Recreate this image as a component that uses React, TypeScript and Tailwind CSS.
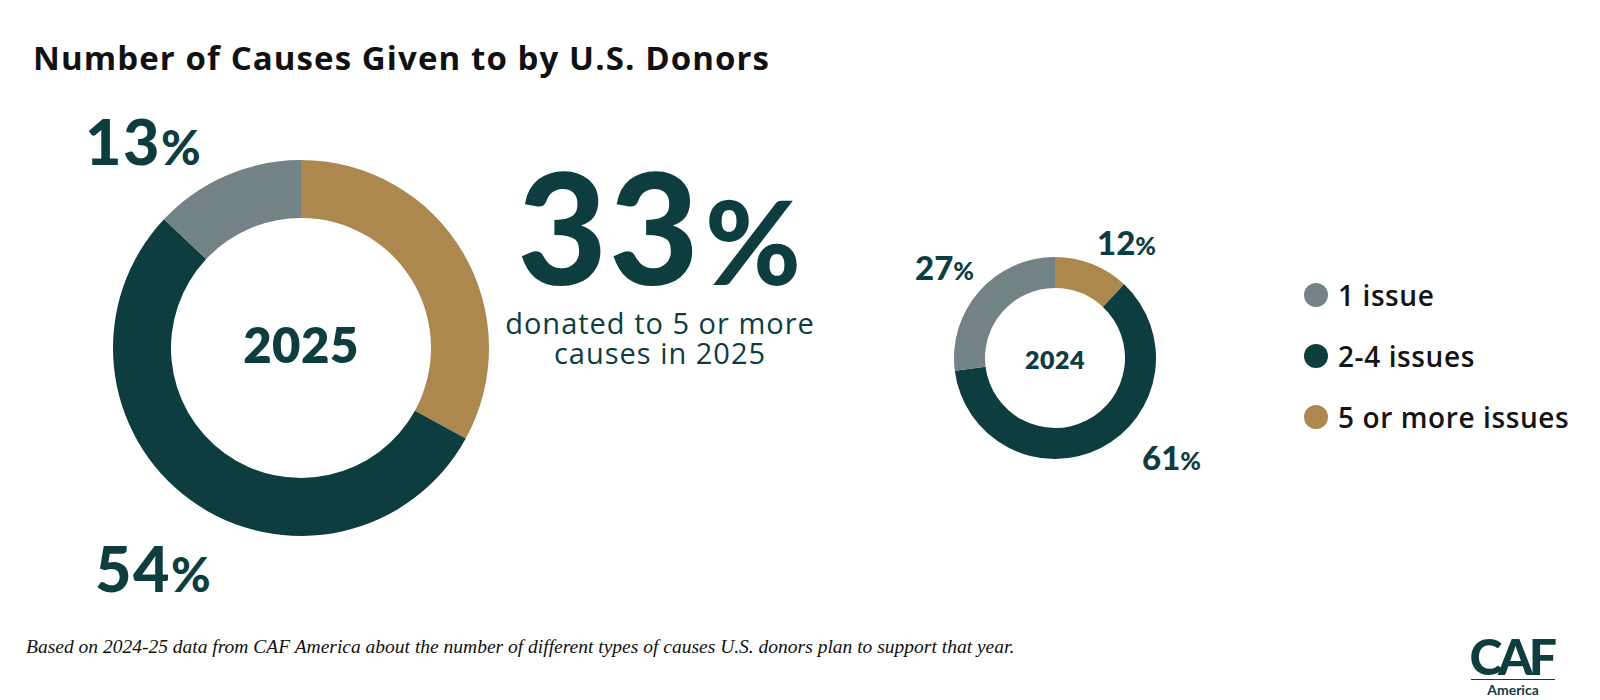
const DARK = "#0e3d3f";
const TAN = "#ad884e";
const GRAY = "#738385";

type Slice = { value: number; color: string };

function point(cx: number, cy: number, radius: number, deg: number) {
  const a = (deg * Math.PI) / 180;
  return [cx + radius * Math.sin(a), cy - radius * Math.cos(a)];
}

function arcPath(cx: number, cy: number, R: number, r: number, a0: number, a1: number) {
  const large = a1 - a0 > 180 ? 1 : 0;
  const [x0, y0] = point(cx, cy, R, a0);
  const [x1, y1] = point(cx, cy, R, a1);
  const [x2, y2] = point(cx, cy, r, a1);
  const [x3, y3] = point(cx, cy, r, a0);
  return `M ${x0} ${y0} A ${R} ${R} 0 ${large} 1 ${x1} ${y1} L ${x2} ${y2} A ${r} ${r} 0 ${large} 0 ${x3} ${y3} Z`;
}

function Donut({ size, thickness, slices }: { size: number; thickness: number; slices: Slice[] }) {
  const R = size / 2;
  const r = R - thickness;
  let acc = 0;
  return (
    <svg width={size} height={size} viewBox={`0 0 ${size} ${size}`} className="block">
      {slices.map((s, i) => {
        const a0 = acc * 3.6;
        acc += s.value;
        const a1 = acc * 3.6;
        return <path key={i} d={arcPath(R, R, R, r, a0, a1)} fill={s.color} />;
      })}
    </svg>
  );
}

const LEGEND = [
  { label: "1 issue", color: "bg-[#738385]" },
  { label: "2-4 issues", color: "bg-[#0e3d3f]" },
  { label: "5 or more issues", color: "bg-[#ad884e]" },
];

export default function App() {
  return (
    <div className="w-[1600px] h-[700px] bg-white flex flex-col overflow-hidden font-['Lato',sans-serif]">
      <h1 className="ml-[33px] mt-[42px] text-[33px] leading-[32px] font-bold text-[#111111] font-['Open_Sans',sans-serif] tracking-[1.1px]">
        Number of Causes Given to by U.S. Donors
      </h1>

      <div className="flex items-start mt-[26px] h-[500px] shrink-0">
        {/* 2025 donut */}
        <div className="relative w-[420px] h-[500px] ml-[80px] pt-[60px] pl-[33px] text-[#0e3d3f]">
          <Donut
            size={376}
            thickness={58}
            slices={[
              { value: 33, color: TAN },
              { value: 54, color: DARK },
              { value: 13, color: GRAY },
            ]}
          />
          <div className="absolute left-[33px] top-[60px] w-[376px] h-[376px] flex items-center justify-center pb-[7px]">
            <span className="text-[49px] leading-none font-extrabold tracking-[0.5px]">2025</span>
          </div>
          <div className="absolute left-[5px] top-[9px] text-[63px] leading-none font-black tracking-[1.5px] whitespace-nowrap">
            13<span className="text-[48px]">%</span>
          </div>
          <div className="absolute left-[15px] top-[436px] text-[63px] leading-none font-black tracking-[1.5px] whitespace-nowrap">
            54<span className="text-[48px]">%</span>
          </div>
        </div>

        {/* headline stat */}
        <div className="w-[320px] flex flex-col items-center mt-[48px] text-[#0e3d3f] text-center">
          <div className="text-[155px] leading-none font-black tracking-[2px] whitespace-nowrap">
            33<span className="text-[116px] ml-[4px]">%</span>
          </div>
          <p className="mt-[5px] text-[29px] leading-[30px] font-medium tracking-[1px] font-['Open_Sans',sans-serif] whitespace-nowrap">
            donated to 5 or more
            <br />
            causes in 2025
          </p>
        </div>

        {/* 2024 donut */}
        <div className="relative w-[400px] h-[500px] ml-[60px] pt-[157px] pl-[74px] text-[#0e3d3f]">
          <Donut
            size={202}
            thickness={31}
            slices={[
              { value: 12, color: TAN },
              { value: 61, color: DARK },
              { value: 27, color: GRAY },
            ]}
          />
          <div className="absolute left-[74px] top-[157px] w-[202px] h-[202px] flex items-center justify-center pt-[3px]">
            <span className="text-[25px] leading-none font-extrabold tracking-[0.5px]">2024</span>
          </div>
          <div className="absolute left-[35px] top-[151px] text-[33px] leading-none font-black whitespace-nowrap">
            27<span className="text-[25px]">%</span>
          </div>
          <div className="absolute left-[217px] top-[126px] text-[33px] leading-none font-black whitespace-nowrap">
            12<span className="text-[25px]">%</span>
          </div>
          <div className="absolute left-[262px] top-[341px] text-[33px] leading-none font-black whitespace-nowrap">
            61<span className="text-[25px]">%</span>
          </div>
        </div>

        {/* legend */}
        <ul className="ml-[24px] mt-[164px] flex flex-col">
          {LEGEND.map((item) => (
            <li key={item.label} className="h-[61px] flex items-center gap-[10px]">
              <span className={`w-[24px] h-[24px] rounded-full shrink-0 ${item.color}`} />
              <span className="text-[28px] leading-none font-semibold tracking-[0.6px] text-[#141414] whitespace-nowrap font-['Open_Sans',sans-serif]">
                {item.label}
              </span>
            </li>
          ))}
        </ul>
      </div>

      <div className="flex items-start h-[100px]">
        <p className="ml-[26px] mt-[37px] text-[19.5px] leading-none italic text-[#111111] font-['Liberation_Serif',serif] whitespace-nowrap">
          Based on 2024-25 data from CAF America about the number of different types of causes U.S. donors plan to support that year.
        </p>
        <div className="ml-auto mr-[45px] mt-[33px] w-[84px] flex flex-col items-center text-[#0e3d3f]">
          <span className="text-[50px] leading-[46px] font-black tracking-[-4.5px] pr-[4px]">CAF</span>
          <span className="w-full border-t-[1.5px] border-[#0e3d3f]" />
          <span className="mt-[2px] text-[14px] leading-[15px] font-bold">America</span>
        </div>
      </div>
    </div>
  );
}
